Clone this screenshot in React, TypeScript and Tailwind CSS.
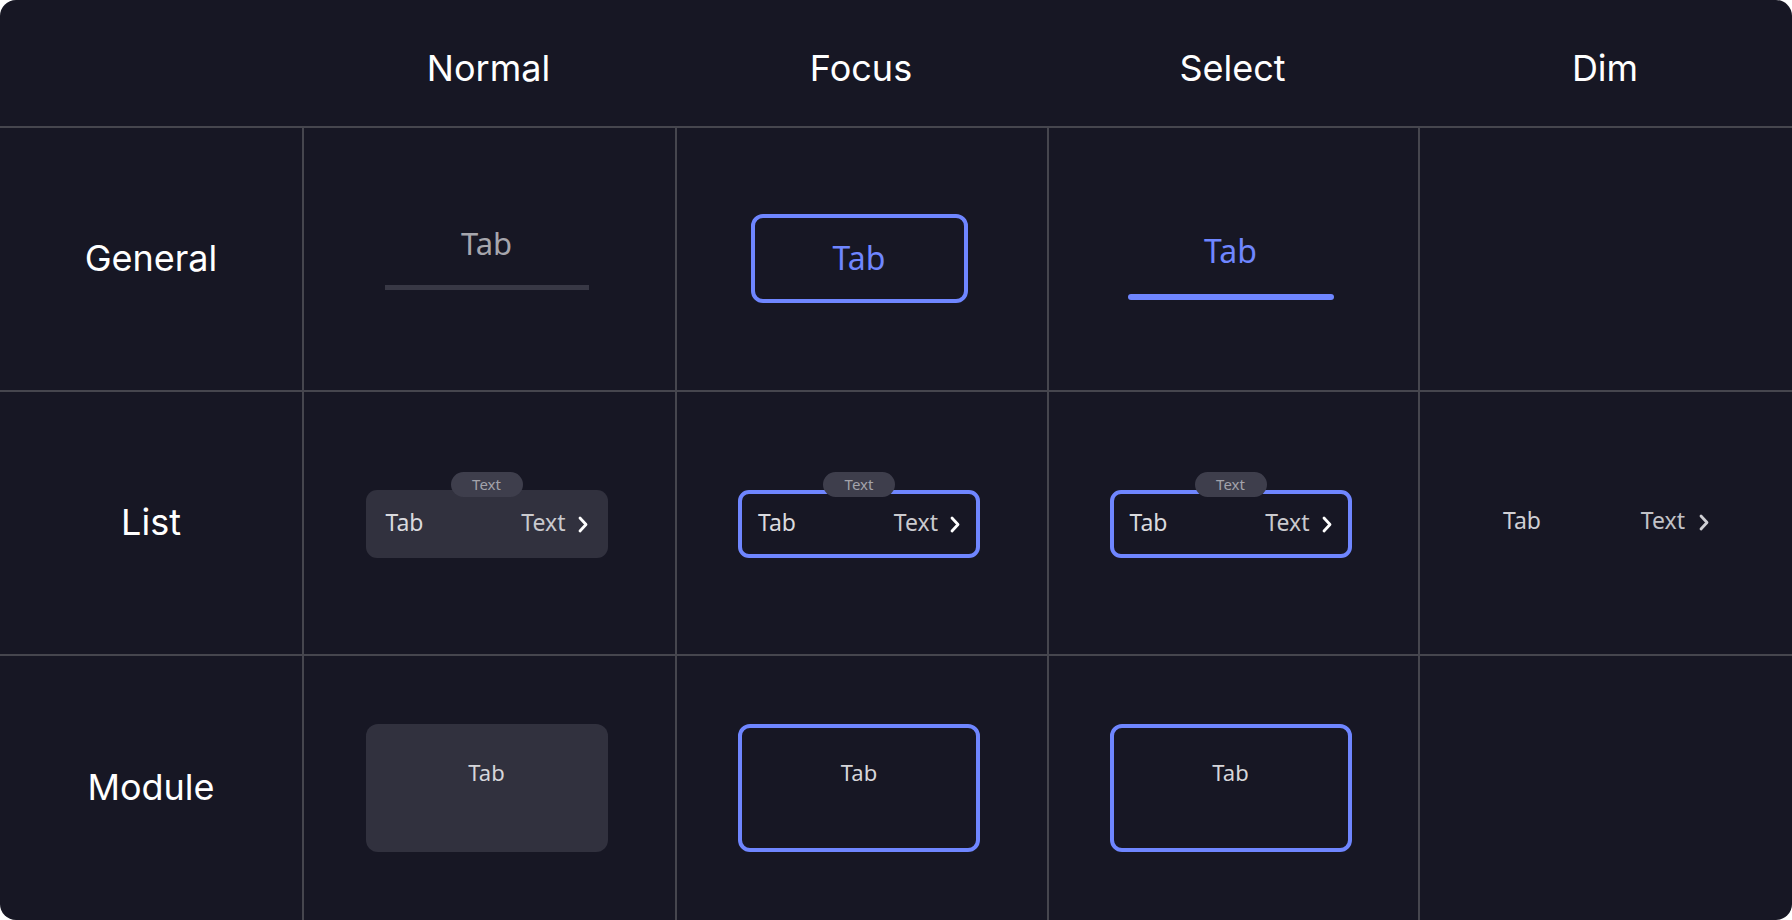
import React from "react";

const Chevron = ({ dim }: { dim?: boolean }) => (
  <svg width="10" height="17" viewBox="0 0 10 17" fill="none" className="shrink-0">
    <path
      d="M2 2 L8 8.5 L2 15"
      stroke={dim ? "#cfcfd4" : "#ffffff"}
      strokeWidth="2.8"
      strokeLinecap="round"
      strokeLinejoin="round"
    />
  </svg>
);

const Badge = () => (
  <div className="absolute left-1/2 top-[-18px] flex h-[25px] w-[72px] -translate-x-1/2 items-center justify-center rounded-full bg-[#3e3e4c] pb-[1px] text-[15px] leading-none text-[#a3a3ab]">
    Text
  </div>
);

const ListItem = ({ variant }: { variant: "normal" | "focus" | "dim" }) => {
  const box =
    variant === "normal"
      ? "w-[242px] bg-[#31313e] px-[20px]"
      : variant === "focus"
      ? "w-[242px] border-[4px] border-[#6f86ff] px-[16px]"
      : "ml-[6px] w-[246px] px-[20px]";
  return (
    <div className="relative">
      <div className={`flex h-[68px] items-center justify-between rounded-[11px] pb-[4px] ${box}`}>
        <span className={`text-[23px] leading-none ${variant === "dim" ? "text-[#cfcfd4]" : "text-[#dadade]"}`}>Tab</span>
        <div className={`flex items-center ${variant === "dim" ? "gap-[14px]" : "gap-[12px]"}`}>
          <span className={`text-[23px] leading-none ${variant === "dim" ? "text-[#c2c2c7]" : "text-[#cacace]"}`}>Text</span>
          <div className="pt-[4px]">
            <Chevron dim={variant === "dim"} />
          </div>
        </div>
      </div>
      {variant !== "dim" && <Badge />}
    </div>
  );
};

const ModuleItem = ({ focus }: { focus?: boolean }) => (
  <div
    className={`flex h-[128px] w-[242px] justify-center rounded-[12px] ${
      focus ? "border-[4px] border-[#6f86ff] pt-[33px]" : "bg-[#31313e] pt-[37px]"
    }`}
  >
    <span className="text-[22px] leading-[22px] text-[#d6d6da]">Tab</span>
  </div>
);

export default function App() {
  const header = "flex items-center justify-center pt-[9px] text-[36px] text-white";
  const label = "flex items-center justify-center border-t-2 border-[#46464e] pb-[2px] text-[36px] text-white";
  const cell = "flex flex-col items-center border-t-2 border-l-2 border-[#46464e] pr-[6px]";
  return (
    <div className="min-h-screen bg-white">
      <div
        className="grid h-[920px] w-[1792px] grid-cols-[302px_373px_372px_371px_1fr] grid-rows-[126px_264px_264px_1fr] overflow-hidden rounded-[16px] bg-[#171724]"
        style={{ fontFamily: "'Noto Sans', 'Open Sans', sans-serif" }}
      >
        {/* Header */}
        <div />
        <div className={header} style={{ fontFamily: "Inter, sans-serif" }}>Normal</div>
        <div className={header} style={{ fontFamily: "Inter, sans-serif" }}>Focus</div>
        <div className={header} style={{ fontFamily: "Inter, sans-serif" }}>Select</div>
        <div className={header} style={{ fontFamily: "Inter, sans-serif" }}>Dim</div>

        {/* General */}
        <div className={label} style={{ fontFamily: "Inter, sans-serif" }}>General</div>
        <div className={`${cell} pt-[99px]`}>
          <span className="text-[31px] leading-[32px] text-[#a6a6ad]">Tab</span>
          <div className="mt-[26px] h-[5px] w-[204px] bg-[#383845]" />
        </div>
        <div className={`${cell} pt-[86px]`}>
          <div className="flex h-[89px] w-[217px] items-center justify-center rounded-[12px] border-[4px] border-[#6f86ff] pb-[2px]">
            <span className="text-[32px] leading-none text-[#6f86ff]">Tab</span>
          </div>
        </div>
        <div className={`${cell} pt-[107px]`}>
          <span className="text-[32px] leading-[32px] text-[#6f86ff]">Tab</span>
          <div className="mt-[27px] h-[6px] w-[206px] rounded-full bg-[#6f86ff]" />
        </div>
        <div className={cell} />

        {/* List */}
        <div className={label} style={{ fontFamily: "Inter, sans-serif" }}>List</div>
        <div className={`${cell} pt-[98px]`}>
          <ListItem variant="normal" />
        </div>
        <div className={`${cell} pt-[98px]`}>
          <ListItem variant="focus" />
        </div>
        <div className={`${cell} pt-[98px]`}>
          <ListItem variant="focus" />
        </div>
        <div className={`${cell} pt-[96px]`}>
          <ListItem variant="dim" />
        </div>

        {/* Module */}
        <div className={label} style={{ fontFamily: "Inter, sans-serif" }}>Module</div>
        <div className={`${cell} pt-[68px]`}>
          <ModuleItem />
        </div>
        <div className={`${cell} pt-[68px]`}>
          <ModuleItem focus />
        </div>
        <div className={`${cell} pt-[68px]`}>
          <ModuleItem focus />
        </div>
        <div className={cell} />
      </div>
    </div>
  );
}
